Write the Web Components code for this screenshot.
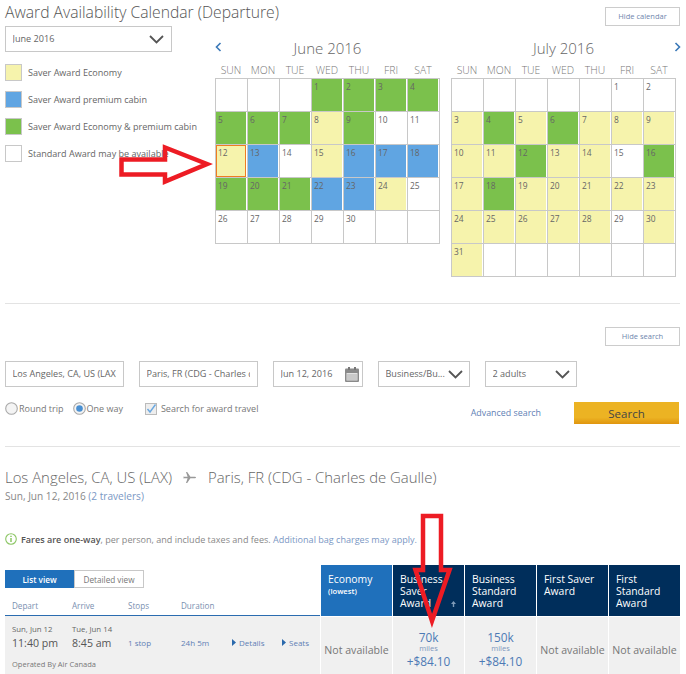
<!DOCTYPE html>
<html lang="en">
<head>
<meta charset="utf-8">
<title>Award Availability Calendar</title>
<style>
html, body { margin: 0; height: 674px; overflow: hidden; background: #fff; }
body { font-family: "Open Sans", "Liberation Sans", sans-serif; color: #666; }
</style>
</head>
<body>
<award-page></award-page>
<script>
const CHEVRON = `<svg width="15" height="9" viewBox="0 0 15 9"><path d="M1 1l6.5 6.5L14 1" fill="none" stroke="#555" stroke-width="1.8"/></svg>`;

// Outlined button (hide calendar / hide search)
class OutlineButton extends HTMLElement {
    constructor() {
        super();
        this.attachShadow({ mode: 'open' });
        this.shadowRoot.innerHTML = `
            <style>
                :host { display: flex; align-items: center; justify-content: center; box-sizing: border-box;
                    width: 75px; height: 19px; border: 1px solid #ccc; font-size: 7.5px; color: #6f86ad; padding-bottom: 1px; }
            </style>
            <slot></slot>
        `;
    }
}
customElements.define('outline-button', OutlineButton);

// Text box or select
class FieldBox extends HTMLElement {
    constructor() {
        super();
        this.attachShadow({ mode: 'open' });
        const arrow = this.hasAttribute('arrow') ? CHEVRON : '';
        const cal = this.hasAttribute('calendar') ? `<svg width="14" height="15" viewBox="0 0 14 15"><rect x="0" y="1.5" width="14" height="13.5" rx="1" fill="#8a8a8a"/><rect x="3" y="0" width="2" height="3" fill="#777"/><rect x="9" y="0" width="2" height="3" fill="#777"/><path d="M1.5 6h11v7.5h-11z" fill="#e2e2e2"/><path d="M2 8h10M2 10h10M2 12h10" stroke="#a5a5a5" stroke-width=".8"/></svg>` : '';
        this.shadowRoot.innerHTML = `
            <style>
                :host { display: flex; align-items: center; box-sizing: border-box; height: 26px;
                    border: 1px solid #c8c8c8; padding: 0 7px 0 6.5px; font-size: 9.1px; color: #666; }
                .label { flex: 1; min-width: 0; overflow: hidden; white-space: nowrap; padding-bottom: 1px; }
                svg { flex: none; display: block; }
            </style>
            <span class="label"><slot></slot></span>${arrow}${cal}
        `;
    }
}
customElements.define('field-box', FieldBox);

// Legend row
class LegendItem extends HTMLElement {
    constructor() {
        super();
        this.attachShadow({ mode: 'open' });
        this.shadowRoot.innerHTML = `
            <style>
                :host { display: flex; align-items: center; height: 17px; font-size: 9.05px; color: #666; white-space: nowrap; }
                .swatch { box-sizing: border-box; width: 17px; height: 17px; border: 1px solid #c8c8c8;
                    background: ${this.getAttribute('color')}; margin-right: 6px; flex: none; }
            </style>
            <span class="swatch"></span><slot></slot>
        `;
    }
}
customElements.define('legend-item', LegendItem);

// One month of the calendar. days = letters per day: y saver, b premium, g both, w standard
class CalMonth extends HTMLElement {
    constructor() {
        super();
        this.attachShadow({ mode: 'open' });
        const offset = Number(this.getAttribute('offset'));
        const days = this.getAttribute('days').replace(/ /g, '');
        const rows = Number(this.getAttribute('rows'));
        const selected = Number(this.getAttribute('selected'));
        const colors = { y: '#f6f3ac', b: '#60a5e2', g: '#7bc14c', w: '#fff' };
        let cells = '';
        for (let i = 0; i < rows * 7; i++) {
            const d = i - offset + 1;
            if (d >= 1 && d <= days.length) {
                const cls = d === selected ? ' sel' : '';
                cells += `<div class="cell${cls}" style="--fill:${colors[days[d - 1]]}">${d}</div>`;
            } else {
                cells += `<div class="cell" style="--fill:#fff"></div>`;
            }
        }
        const heads = ['SUN', 'MON', 'TUE', 'WED', 'THU', 'FRI', 'SAT'].map(h => `<span>${h}</span>`).join('');
        this.shadowRoot.innerHTML = `
            <style>
                :host { display: block; width: 225px; }
                h3 { margin: 0; height: 22px; line-height: 22px; text-align: center; font-size: 15px; font-weight: 300; color: #666; }
                .heads { display: grid; grid-template-columns: repeat(7, 32px); height: 19px; box-sizing: border-box; padding-top: 3px;
                    align-items: center; text-align: center; font-size: 10.4px; font-weight: 300; color: #777; }
                .grid { display: grid; grid-template-columns: repeat(7, 32px); grid-auto-rows: 33px;
                    border-left: 1px solid #c8c8c8; border-top: 1px solid #c8c8c8; width: 224px; }
                .cell { position: relative; box-sizing: border-box; border-right: 1px solid #c8c8c8; border-bottom: 1px solid #c8c8c8;
                    background: var(--fill); box-shadow: inset -1px 0 #fff; padding: 1px 0 0 2px; font-size: 8.4px; line-height: 13px; color: #666; }
                .sel::after { content: ''; position: absolute; left: 0; top: 0; right: 1px; bottom: 0; border: 1px solid #ef7d22; }
            </style>
            <h3><slot></slot></h3>
            <div class="heads">${heads}</div>
            <div class="grid">${cells}</div>
        `;
    }
}
customElements.define('cal-month', CalMonth);

// Calendar block
class AwardCalendar extends HTMLElement {
    constructor() {
        super();
        this.attachShadow({ mode: 'open' });
        this.shadowRoot.innerHTML = `
            <style>
                :host { display: block; height: 303px; padding: 0 6px 0 5px; box-sizing: border-box; }
                .top { display: flex; justify-content: space-between; align-items: flex-start; height: 26px; }
                h2 { margin: 0; font-size: 15.7px; line-height: 26px; height: 26px; margin-top: -1px; font-weight: 300; color: #555; white-space: nowrap; }
                outline-button { margin-top: 7px; }
                .body { display: flex; }
                .left { width: 210px; flex: none; }
                .left field-box { width: 167px; }
                .legend { display: grid; gap: 10px; margin-top: 12px; }
                .months { display: flex; gap: 11px; margin-top: 11px; position: relative; }
                .nav { position: absolute; top: 5px; }
            </style>
            <div class="top">
                <h2>Award Availability Calendar (Departure)</h2>
                <outline-button>Hide calendar</outline-button>
            </div>
            <div class="body">
                <div class="left">
                    <field-box arrow>June 2016</field-box>
                    <div class="legend">
                        <legend-item color="#f6f3ac">Saver Award Economy</legend-item>
                        <legend-item color="#60a5e2">Saver Award premium cabin</legend-item>
                        <legend-item color="#7bc14c">Saver Award Economy &amp; premium cabin</legend-item>
                        <legend-item color="#fff">Standard Award may be available</legend-item>
                    </div>
                </div>
                <div class="months">
                    <svg class="nav" style="left:0" width="7" height="10" viewBox="0 0 7 10"><path d="M5.5 1L1.5 5l4 4" fill="none" stroke="#3a78b8" stroke-width="1.6"/></svg>
                    <svg class="nav" style="left:459px" width="7" height="10" viewBox="0 0 7 10"><path d="M1.5 1l4 4-4 4" fill="none" stroke="#3a78b8" stroke-width="1.6"/></svg>
                    <cal-month offset="3" rows="5" selected="12" days="gggg gggygww ybwybbb gggbbyw wwwww">June 2016</cal-month>
                    <cal-month offset="5" rows="6" days="ww ygygyyy yygyywg ygyyyyy yyyyywy y">July 2016</cal-month>
                </div>
            </div>
        `;
    }
}
customElements.define('award-calendar', AwardCalendar);

// Search form
class SearchForm extends HTMLElement {
    constructor() {
        super();
        this.attachShadow({ mode: 'open' });
        this.shadowRoot.innerHTML = `
            <style>
                :host { display: block; height: 142px; box-sizing: border-box; padding: 23px 6px 0 5px; }
                .hide { display: flex; justify-content: flex-end; }
                .fields { display: flex; margin-top: 15px; }
                .opts { display: flex; align-items: center; margin-top: 15px; height: 22px; font-size: 9px; color: #777; white-space: nowrap; }
                .opt { display: flex; align-items: center; gap: 1px; margin-top: -9px; }
                .adv { margin-left: auto; color: #5f7fb5; font-size: 8.9px; margin-right: 33px; padding-bottom: 1px; }
                .btn { width: 105px; height: 22px; display: flex; align-items: center; justify-content: center; margin-right: 1px;
                    background: linear-gradient(#ecb323 0, #ecb323 70%, #e0950f 100%); font-size: 11.5px; color: #444; }
                svg { display: block; flex: none; }
            </style>
            <div class="hide"><outline-button>Hide search</outline-button></div>
            <div class="fields">
                <field-box style="width:119px">Los Angeles, CA, US (LAX)</field-box>
                <field-box style="width:119px;margin-left:15px">Paris, FR (CDG - Charles de</field-box>
                <field-box calendar style="width:90px;margin-left:15px;padding-right:3px">Jun 12, 2016</field-box>
                <field-box arrow style="width:92px;margin-left:15px;padding-right:6px">Business/Bu...</field-box>
                <field-box arrow style="width:92px;margin-left:15px;padding-right:6px">2 adults</field-box>
            </div>
            <div class="opts">
                <span class="opt">
                    <svg width="13" height="13" viewBox="0 0 13 13"><circle cx="6.5" cy="6.5" r="5.8" fill="#f4f4f4" stroke="#a8a8a8" stroke-width="1.1"/></svg>Round trip
                </span>
                <span class="opt" style="margin-left:9px">
                    <svg width="13" height="13" viewBox="0 0 13 13"><circle cx="6.5" cy="6.5" r="5.8" fill="#f4f4f4" stroke="#a8a8a8" stroke-width="1.1"/><circle cx="6.5" cy="6.5" r="3.3" fill="#4a90d2"/></svg>One way
                </span>
                <span class="opt" style="margin-left:22px;gap:4px">
                    <svg width="12" height="12" viewBox="0 0 12 12"><rect x=".5" y=".5" width="11" height="11" fill="#eee" stroke="#bbb"/><path d="M2.5 6l2.5 3L10.5 1.5" fill="none" stroke="#6aa8e0" stroke-width="1.4"/></svg>Search for award travel
                </span>
                <span class="adv">Advanced search</span>
                <span class="btn">Search</span>
            </div>
        `;
    }
}
customElements.define('search-form', SearchForm);

// Fare column head
class FareHead extends HTMLElement {
    constructor() {
        super();
        this.attachShadow({ mode: 'open' });
        this.shadowRoot.innerHTML = `
            <style>
                :host { display: block; position: relative; box-sizing: border-box; height: 51px; padding: 8px 7px 0 7px;
                    background: var(--bg, #002e5b); color: #fff; font-size: 10.4px; line-height: 12px; }
                ::slotted(small) { display: block; font-size: 7.6px; font-weight: 600; line-height: 13px; }
            </style>
            <slot></slot>
        `;
    }
}
customElements.define('fare-head', FareHead);

// Fare cell: price or not available
class FareCell extends HTMLElement {
    constructor() {
        super();
        this.attachShadow({ mode: 'open' });
        const miles = this.getAttribute('miles');
        const body = miles
            ? `<div class="m">${miles}</div><div class="u">miles</div><div class="p">+$84.10</div>`
            : `<div class="na">Not available</div>`;
        this.shadowRoot.innerHTML = `
            <style>
                :host { display: flex; flex-direction: column; justify-content: center; align-items: center; height: 66px;
                    background: #f0f0f0; white-space: nowrap; }
                .m { font-size: 11.8px; line-height: 13px; color: #4d7ab5; }
                .u { font-size: 7.5px; line-height: 9px; color: #7d97bd; }
                .p { font-size: 11.8px; line-height: 16px; color: #4d7ab5; }
                .na { font-size: 10.6px; color: #777; }
            </style>
            ${body}
        `;
    }
}
customElements.define('fare-cell', FareCell);

// Results table
class ResultsTable extends HTMLElement {
    constructor() {
        super();
        this.attachShadow({ mode: 'open' });
        const caret = `<svg width="4" height="7" viewBox="0 0 4 7"><path d="M0 0l4 3.5L0 7z" fill="#2a69ac"/></svg>`;
        this.shadowRoot.innerHTML = `
            <style>
                :host { display: block; padding-left: 5px; box-sizing: border-box; }
                .route { display: flex; align-items: center; height: 20px; font-size: 14.9px; font-weight: 300; color: #666; white-space: nowrap; margin-top: 20px; }
                .route svg { margin: 0 12px 0 11px; }
                .date { font-size: 10.1px; line-height: 14px; color: #888; margin-top: 2px; }
                .date b { font-weight: 400; color: #7a97c4; }
                .note { display: flex; align-items: center; gap: 4px; height: 14px; margin-top: 29px; font-size: 9.05px; color: #888; white-space: nowrap; }
                .note b { font-weight: 600; color: #555; }
                .note i { font-style: normal; color: #7a97c4; }
                .table { display: grid; grid-template-columns: 315px repeat(5, 71px); gap: 0 1px; margin-top: 19px; }
                .left-head { display: flex; flex-direction: column; height: 51px; box-sizing: border-box; border-bottom: 1px solid #2a6cb0; }
                .tabs { display: flex; margin-top: 5px; font-size: 8.2px; }
                .tabs span { box-sizing: border-box; height: 18px; display: flex; align-items: center; justify-content: center; }
                .on { width: 69px; background: #1f70bb; color: #fff; font-weight: 600; }
                .off { width: 70px; border: 1px solid #c8c8c8; color: #777; }
                .cols, .flight { display: grid; grid-template-columns: 60px 56px 53px 51px 50px auto; padding-left: 7px; }
                .cols { margin-top: 12px; font-size: 8.1px; color: #7a8fb0; }
                .flight { background: #f0f0f0; height: 67px; padding-top: 8px; box-sizing: border-box; align-content: start; }
                .stack { font-size: 7.8px; line-height: 11px; color: #666; white-space: nowrap; }
                .time { font-size: 10.6px; line-height: 16px; display: block; color: #555; }
                .mid { font-size: 8px; line-height: 12px; padding-top: 13px; color: #5f7fb5; white-space: nowrap; }
                .mid svg { margin-right: 3px; }
                .op { grid-column: 1 / 5; font-size: 7.5px; line-height: 11px; color: #777; margin-top: 8px; }
                .sort { position: absolute; right: 8px; bottom: 9px; width: 5px; height: 6px; }
                .cell-fare { margin-top: 1px; }
            </style>
            <div class="route">
                Los Angeles, CA, US (LAX)
                <svg width="13" height="13" viewBox="0 0 13 13"><path d="M0 5.8h4.6L3 1h1.2l3.2 4.8H12c.6 0 1 .3 1 .7s-.4.7-1 .7H7.4L4.2 12H3l1.6-4.8H0L.8 6.5z" fill="#999"/></svg>
                Paris, FR (CDG - Charles de Gaulle)
            </div>
            <div class="date">Sun, Jun 12, 2016 <b>(2 travelers)</b></div>
            <div class="note">
                <svg width="12" height="12" viewBox="0 0 12 12"><circle cx="6" cy="6" r="5.3" fill="none" stroke="#8cc665" stroke-width="1.1"/><path d="M6 5v4M6 2.8v1.2" stroke="#8cc665" stroke-width="1.5"/></svg>
                <span><b>Fares are one-way</b>, per person, and include taxes and fees. <i>Additional bag charges may apply.</i></span>
            </div>
            <div class="table">
                <div class="left-head">
                    <div class="tabs"><span class="on">List view</span><span class="off">Detailed view</span></div>
                    <div class="cols"><span>Depart</span><span>Arrive</span><span>Stops</span><span>Duration</span></div>
                </div>
                <fare-head style="--bg:#1f70bb">Economy<small>(lowest)</small></fare-head>
                <fare-head>Business Saver Award
                    <svg class="sort" viewBox="0 0 5 6"><path d="M2.5 0L5 3H0z M1.8 3h1.4v3H1.8z" fill="#7f9bb8"/></svg>
                </fare-head>
                <fare-head>Business Standard Award</fare-head>
                <fare-head>First Saver Award</fare-head>
                <fare-head>First Standard Award</fare-head>
                <div class="flight">
                    <div class="stack">Sun, Jun 12<span class="time">11:40 pm</span></div>
                    <div class="stack">Tue, Jun 14<span class="time">8:45 am</span></div>
                    <div class="mid">1 stop</div>
                    <div class="mid">24h 5m</div>
                    <div class="mid">${caret}Details</div>
                    <div class="mid">${caret}Seats</div>
                    <div class="op">Operated By Air Canada</div>
                </div>
                <fare-cell class="cell-fare"></fare-cell>
                <fare-cell class="cell-fare" miles="70k"></fare-cell>
                <fare-cell class="cell-fare" miles="150k"></fare-cell>
                <fare-cell class="cell-fare"></fare-cell>
                <fare-cell class="cell-fare"></fare-cell>
            </div>
        `;
    }
}
customElements.define('results-table', ResultsTable);

// Red arrows drawn on top of the screenshot
class RedArrows extends HTMLElement {
    constructor() {
        super();
        this.attachShadow({ mode: 'open' });
        this.shadowRoot.innerHTML = `
            <style>
                :host { display: block; position: absolute; left: 0; top: 0; width: 686px; height: 674px; pointer-events: none; }
            </style>
            <svg width="686" height="674" fill="none" stroke="#ed1c24" stroke-width="4.5" stroke-linejoin="miter">
                <path d="M121.5 159.5H165V147.5L207 164L165 181.5V174.5H121.5z"/>
                <path d="M423 516H441V570H449.5L432 621L415.5 570H423z"/>
            </svg>
        `;
    }
}
customElements.define('red-arrows', RedArrows);

// Whole page
class AwardPage extends HTMLElement {
    constructor() {
        super();
        this.attachShadow({ mode: 'open' });
        this.shadowRoot.innerHTML = `
            <style>
                :host { display: block; position: relative; width: 686px; height: 674px; overflow: hidden; }
                hr { margin: 0 6px 0 5px; border: 0; border-top: 1px solid #e3e3e3; }
            </style>
            <award-calendar></award-calendar>
            <hr>
            <search-form></search-form>
            <hr>
            <results-table></results-table>
            <red-arrows></red-arrows>
        `;
    }
}
customElements.define('award-page', AwardPage);
</script>
</body>
</html>
